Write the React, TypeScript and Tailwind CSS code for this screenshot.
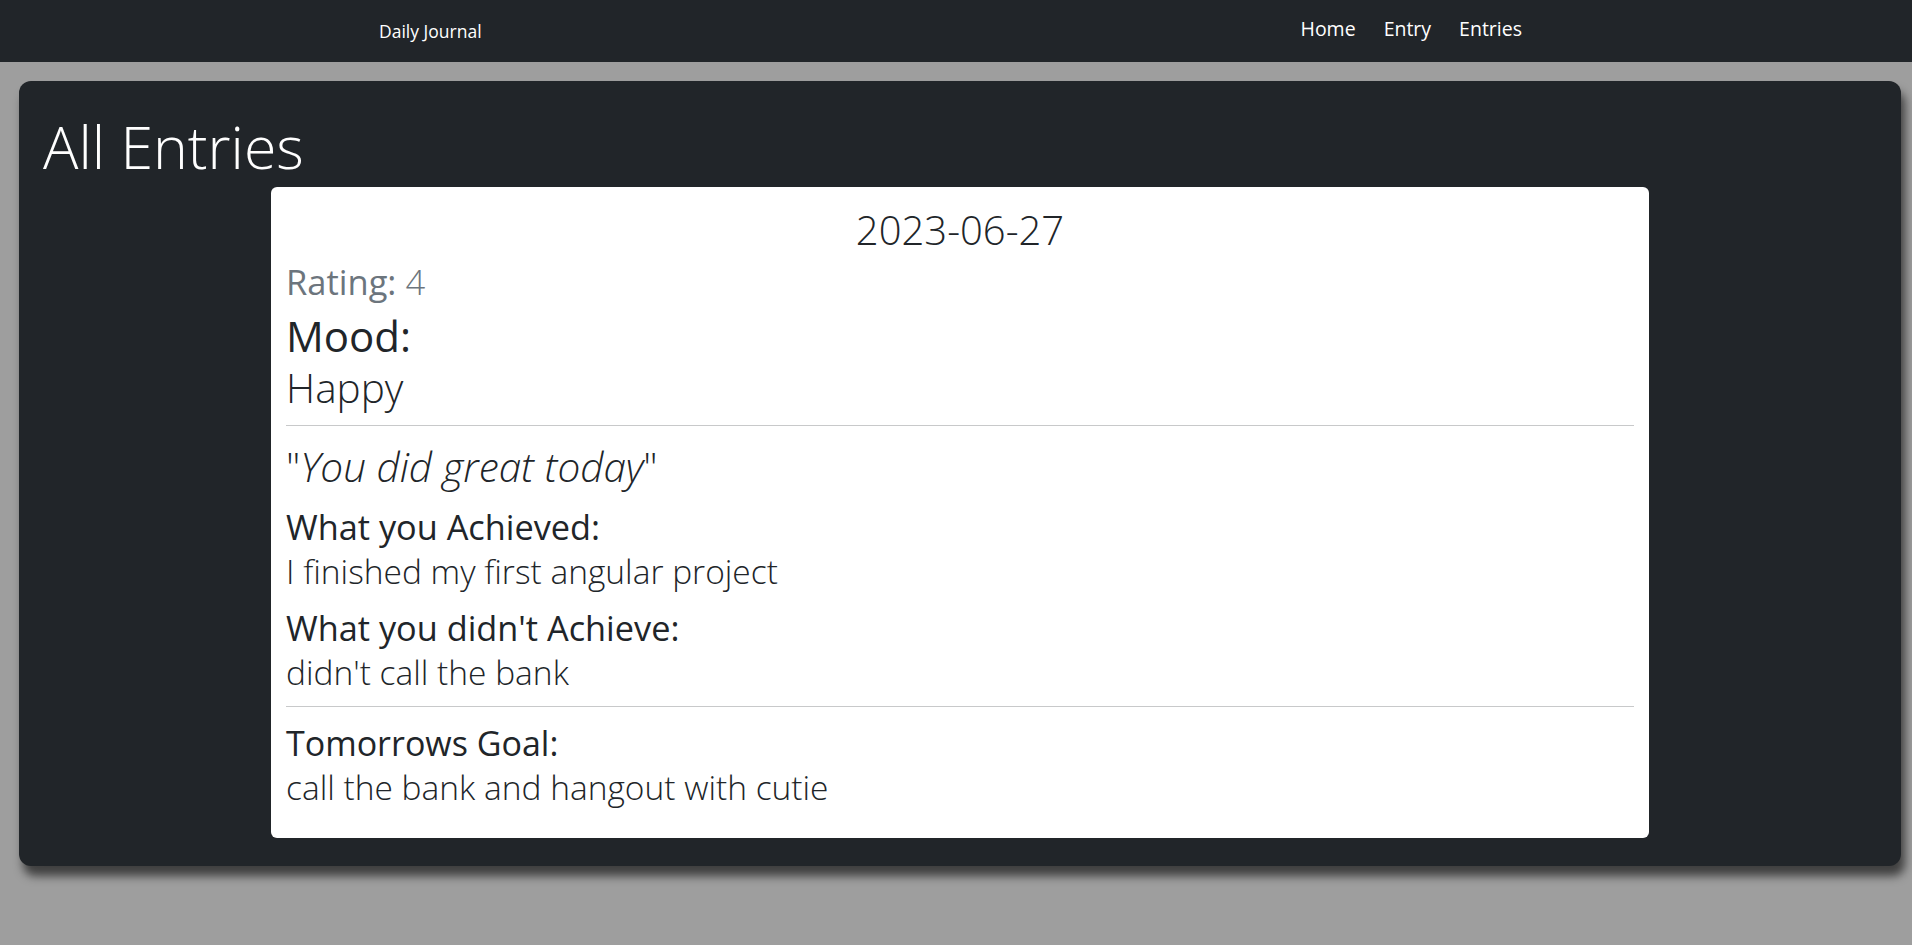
const font = { fontFamily: '"Open Sans", "Noto Sans", sans-serif' };

const sections = [
  { label: "What you Achieved:", value: "I finished my first angular project" },
  { label: "What you didn't Achieve:", value: "didn't call the bank" },
];

function Navbar() {
  return (
    <nav className="flex h-[62px] items-center justify-between bg-[#212529] pl-[379px] pr-[390px] text-white">
      <span className="text-[17.5px] leading-[24px]">Daily Journal</span>
      <div className="mb-[4px] flex gap-[28px] text-[19.5px] leading-[26px]">
        <a>Home</a>
        <a>Entry</a>
        <a>Entries</a>
      </div>
    </nav>
  );
}

function EntryCard() {
  return (
    <div className="mx-auto mt-[5px] w-[1378px] rounded-md bg-white px-[15px] pt-[19px] pb-[32px] text-[#212529]">
      <h2 className="text-center text-[40px] font-light leading-[48px]">2023-06-27</h2>
      <p className="mt-[8px] text-[34.5px] leading-[40px] text-[#6c757d]">
        Rating: <span className="font-light">4</span>
      </p>
      <h3 className="mt-[10px] text-[42px] leading-[48px]">Mood:</h3>
      <p className="mt-[5px] text-[40.5px] font-light leading-[46px]">Happy</p>
      <div className="mt-[14px] h-px bg-[#c8c9ca]" />
      <p className="mt-[18px] text-[40.5px] font-light leading-[46px]">
        "<em>You did great today</em>"
      </p>
      {sections.map((s, i) => (
        <div key={s.label} className={i === 0 ? "mt-[17px]" : "mt-[18px]"}>
          <h4 className="text-[34.3px] leading-[40px]">{s.label}</h4>
          <p className="mt-[5px] text-[33.5px] font-light leading-[38px]">{s.value}</p>
        </div>
      ))}
      <div className="mt-[15px] h-px bg-[#c8c9ca]" />
      <h4 className="mt-[16px] text-[34px] leading-[40px]">Tomorrows Goal:</h4>
      <p className="mt-[5px] text-[33.5px] font-light leading-[38px]">
        call the bank and hangout with cutie
      </p>
    </div>
  );
}

export default function App() {
  return (
    <div className="min-h-screen bg-[#9e9e9e]" style={font}>
      <Navbar />
      <main className="mt-[19px] mr-[11px] ml-[19px] rounded-xl bg-[#212529] px-6 pt-[30px] pb-[28px] shadow-[4px_10px_10px_rgba(0,0,0,0.6)]">
        <h1 className="text-[59px] font-light leading-[1.2] text-white">All Entries</h1>
        <EntryCard />
      </main>
    </div>
  );
}
